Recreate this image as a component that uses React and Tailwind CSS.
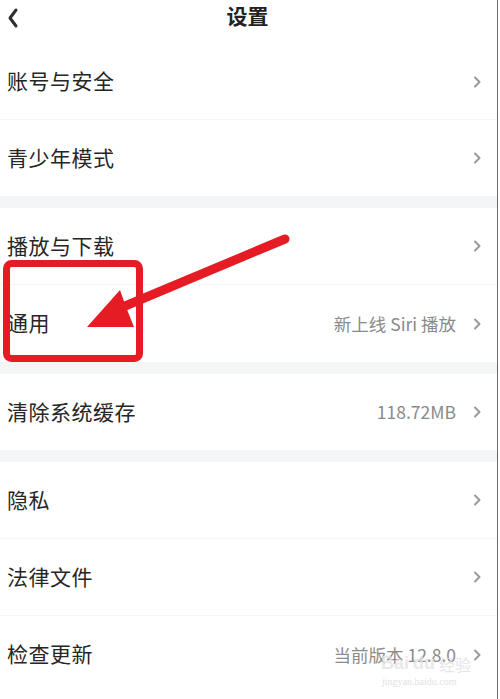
import React from 'react';

const FONT = { fontFamily: '"Noto Sans CJK SC", "Noto Sans", sans-serif' };

const Chevron = () => (
  <svg width="9" height="12" viewBox="0 0 9 12" className="shrink-0">
    <path d="M2 1.5 L6.5 6 L2 10.5" fill="none" stroke="#9a9a9a" strokeWidth="2" strokeLinecap="round" strokeLinejoin="round" />
  </svg>
);

const Row = ({ label, value, h = 'h-[77px]', line = true }) => (
  <div className={`${h} flex items-center pl-[7px] pr-[15px] ${line ? 'border-b border-[#f6f6f6]' : ''}`}>
    <span className="text-[21px] text-[#262626] leading-none tracking-[0.5px] -mt-[2px]">{label}</span>
    <div className="flex-1" />
    {value && <span className="text-[17.5px] text-[#8a8a8a] leading-none mr-[17px]">{value}</span>}
    <Chevron />
  </div>
);

const Band = () => <div className="h-[12px] bg-[#f3f5f7]" />;

export default function App() {
  return (
    <div className="relative w-[500px] h-[699px] bg-white overflow-hidden" style={FONT}>
      <div className="w-[498px] h-full border-r border-[#6b6b6b] flex flex-col">
        {/* header */}
        <div className="h-[44px] grid grid-cols-[60px_1fr_60px] items-center">
          <svg width="14" height="24" viewBox="0 0 14 24" className="ml-[6px] -mt-[8px]">
            <path d="M10 4 L4 12 L10 20" fill="none" stroke="#2f2f2f" strokeWidth="3" strokeLinecap="round" strokeLinejoin="round" />
          </svg>
          <div className="text-center text-[21px] font-semibold text-[#222] leading-none -mt-[13px] pr-[2px]">设置</div>
          <div />
        </div>

        <Row label="账号与安全" h="h-[76px]" />
        <Row label="青少年模式" h="h-[76px]" line={false} />
        <Band />
        <Row label="播放与下载" />
        <Row label="通用" value="新上线 Siri 播放" line={false} />
        <Band />
        <Row label="清除系统缓存" value="118.72MB" h="h-[76px]" line={false} />
        <Band />
        <Row label="隐私" />
        <Row label="法律文件" />
        <Row label="检查更新" value="当前版本 12.8.0" line={false} />
      </div>

      {/* annotation: red box and arrow */}
      <svg className="absolute inset-0 pointer-events-none" width="500" height="699">
        <rect x="6.5" y="263.5" width="133" height="95" rx="5" fill="none" stroke="#e61c24" strokeWidth="7" />
        <line x1="285" y1="239" x2="118" y2="309" stroke="#e61c24" strokeWidth="9" strokeLinecap="round" />
        <polygon points="87,327 120,290 126,307 134,327" fill="#e61c24" />
      </svg>

      {/* watermark */}
      <div className="absolute left-[381px] top-[654px] flex items-end gap-[4px] pointer-events-none opacity-80">
        <span className="text-[18px] leading-none font-bold text-[#e4e4e4]" style={{ fontFamily: '"Liberation Sans", sans-serif' }}>Bai</span>
        <span className="text-[18px] leading-none font-bold text-[#e4e4e4]" style={{ fontFamily: '"Liberation Sans", sans-serif' }}>du</span>
        <span className="text-[16px] leading-none text-[#e0e0e0]">经验</span>
      </div>
      <div className="absolute left-[382px] top-[677px] text-[10px] leading-none text-[#e2e2e2] pointer-events-none" style={{ fontFamily: '"Liberation Serif", serif' }}>
        jingyan.baidu.com
      </div>
    </div>
  );
}
